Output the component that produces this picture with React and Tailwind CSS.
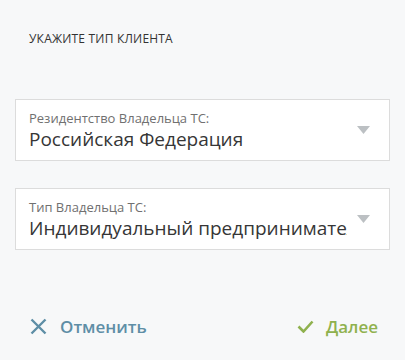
import React from 'react';

const Field = ({ label, value }) => (
  <div className="relative h-[62px] border border-[#dcdcdc] bg-white pl-[13px] pr-[42px] pt-[10px]">
    <div className="text-[13px] leading-[17px] text-[#707070]">{label}</div>
    <div className="overflow-hidden whitespace-nowrap text-[19px] leading-[25px] text-[#363636]">
      {value}
    </div>
    <svg
      className="absolute right-[19px] top-[26px]"
      width="13"
      height="8"
      viewBox="0 0 13 8"
    >
      <path d="M0 0h13L6.5 8z" fill="#bcc0c3" />
    </svg>
  </div>
);

const App = () => {
  return (
    <div
      className="flex h-[360px] w-[405px] flex-col bg-[#f7f8f9] px-[15px]"
      style={{ fontFamily: '"Open Sans", "Liberation Sans", sans-serif' }}
    >
      <h2 className="pl-[14px] pt-[31px] text-[12px] font-medium tracking-[0.2px] leading-[15px] text-[#333]">
        УКАЖИТЕ ТИП КЛИЕНТА
      </h2>

      <div className="mt-[53px] flex flex-col gap-[27px]">
        <Field label="Резидентство Владельца ТС:" value="Российская Федерация" />
        <Field label="Тип Владельца ТС:" value="Индивидуальный предприниматель" />
      </div>

      <div className="mt-[64px] flex items-center justify-between pl-[15px] pr-[12px]">
        <button className="flex items-center gap-[13px] text-[17px] font-semibold text-[#5e8ea6]">
          <svg width="17" height="17" viewBox="0 0 17 17">
            <path d="M1.5 1.5l14 14M15.5 1.5l-14 14" stroke="#5e8ea6" strokeWidth="2.4" />
          </svg>
          Отменить
        </button>
        <button className="flex items-center gap-[12px] text-[17px] font-semibold text-[#8fb14e]">
          <svg width="17" height="13" viewBox="0 0 17 13">
            <path d="M1.5 6.5l5 5 9-10" stroke="#8fb14e" strokeWidth="2.6" fill="none" />
          </svg>
          Далее
        </button>
      </div>
    </div>
  );
};

export default App;
